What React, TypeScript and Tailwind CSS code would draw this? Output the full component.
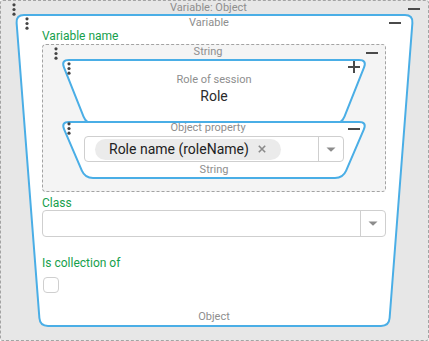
import React, { useLayoutEffect, useRef, useState } from "react";

const BLUE = "#4aaee6";

function roundedPolygon(pts: [number, number][], r: number) {
  let d = "";
  const n = pts.length;
  for (let i = 0; i < n; i++) {
    const v = pts[i];
    const p = pts[(i - 1 + n) % n];
    const q = pts[(i + 1) % n];
    const u1 = [p[0] - v[0], p[1] - v[1]];
    const l1 = Math.hypot(u1[0], u1[1]);
    const u2 = [q[0] - v[0], q[1] - v[1]];
    const l2 = Math.hypot(u2[0], u2[1]);
    const a = [v[0] + (u1[0] / l1) * r, v[1] + (u1[1] / l1) * r];
    const b = [v[0] + (u2[0] / l2) * r, v[1] + (u2[1] / l2) * r];
    d += `${i === 0 ? "M" : "L"}${a[0]},${a[1]} Q${v[0]},${v[1]} ${b[0]},${b[1]} `;
  }
  return d + "Z";
}

function Trap({
  inset = 24,
  radius = 8,
  className = "",
  children,
}: {
  inset?: number;
  radius?: number;
  className?: string;
  children?: React.ReactNode;
}) {
  const ref = useRef<HTMLDivElement>(null);
  const [size, setSize] = useState({ w: 0, h: 0 });
  useLayoutEffect(() => {
    const el = ref.current;
    if (!el) return;
    const update = () => setSize({ w: el.offsetWidth, h: el.offsetHeight });
    update();
    const ro = new ResizeObserver(update);
    ro.observe(el);
    return () => ro.disconnect();
  }, []);
  const { w, h } = size;
  const s = 1;
  const pts: [number, number][] = [
    [s, s],
    [w - s, s],
    [w - s - inset, h - s],
    [s + inset, h - s],
  ];
  return (
    <div ref={ref} className={className}>
      {w > 0 && (
        <svg className="absolute left-0 top-0 pointer-events-none" width={w} height={h}>
          <path d={roundedPolygon(pts, radius)} fill="#ffffff" stroke={BLUE} strokeWidth={2} />
        </svg>
      )}
      {children}
    </div>
  );
}

function Dots({ className }: { className: string }) {
  return (
    <svg className={className} width="4" height="13" viewBox="0 0 4 13">
      <circle cx="2" cy="1.8" r="1.6" fill="#444" />
      <circle cx="2" cy="6.5" r="1.6" fill="#444" />
      <circle cx="2" cy="11.2" r="1.6" fill="#444" />
    </svg>
  );
}

function Minus({ className }: { className: string }) {
  return (
    <svg className={className} width="12" height="2" viewBox="0 0 12 2">
      <rect x="0" y="0" width="12" height="2" fill="#4a4a4a" />
    </svg>
  );
}

function Plus({ className }: { className: string }) {
  return (
    <svg className={className} width="12" height="12" viewBox="0 0 12 12">
      <rect x="0" y="5" width="12" height="2" fill="#4a4a4a" />
      <rect x="5" y="0" width="2" height="12" fill="#4a4a4a" />
    </svg>
  );
}

function Caret() {
  return (
    <svg width="10" height="5" viewBox="0 0 10 5">
      <path d="M0.5 0.5 L9.5 0.5 L5 4.8 Z" fill="#8c8c8c" />
    </svg>
  );
}

export default function App() {
  return (
    <div className="font-['Roboto',sans-serif]">
      <div className="relative w-[429px] h-[341px] border border-dashed border-[#a3a3a3] rounded-[3px] bg-[#e7e7e7]">
        <Dots className="absolute left-[11px] top-[2px]" />
        <Minus className="absolute right-[8px] top-[7px]" />
        <div className="h-[13px] pr-[12px] flex items-center justify-center text-[11px] leading-[13px] text-[#8e8e8e]">
          Variable: Object
        </div>

        <Trap className="relative ml-[14px] w-[399px] pt-[2px]">
          <Dots className="absolute left-[10px] top-[3px]" />
          <Minus className="absolute right-[13px] top-[8px]" />
          <div className="relative">
            <div className="h-[14px] pr-[11px] text-center text-[11px] leading-[14px] text-[#8e8e8e]">
              Variable
            </div>
            <div className="pl-[27px] pr-[28px] flex flex-col">
              <div className="h-[13px] text-[12px] leading-[13px] text-[#16a04c]">Variable name</div>

              <div className="relative mt-[1px] border border-dashed border-[#a3a3a3] rounded-[4px] bg-[#f4f4f4] pl-[17px] pr-[17px] pb-[12px]">
                <Dots className="absolute left-[11px] top-[2px]" />
                <Minus className="absolute right-[7px] top-[7px]" />
                <div className="h-[14px] -mx-[17px] pr-[12px] text-center text-[11px] leading-[14px] text-[#8e8e8e]">
                  String
                </div>

                <Trap inset={25.5} className="relative h-[66px]">
                  <Dots className="absolute left-[7px] top-[3px]" />
                  <Plus className="absolute right-[8px] top-[2px]" />
                  <div className="relative pt-[14px] flex flex-col items-center">
                    <div className="text-[11px] leading-[14px] text-[#8e8e8e]">Role of session</div>
                    <div className="text-[14px] leading-[18px] text-[#2b2b2b]">Role</div>
                  </div>
                </Trap>

                <Trap className="relative z-[1] -mt-[4px] h-[58px]">
                  <Dots className="absolute left-[7px] top-[1px]" />
                  <Minus className="absolute right-[8px] top-[7px]" />
                  <div className="relative flex flex-col">
                    <div className="h-[14px] pr-[12px] text-center text-[11px] leading-[14px] text-[#8e8e8e]">
                      Object property
                    </div>
                    <div className="mt-[1px] mx-[24px] h-[26px] border border-[#cfcfcf] rounded-[4px] flex bg-white">
                      <div className="flex-1 flex items-center pl-[10px]">
                        <div className="h-[21px] flex items-center gap-[9px] rounded-full bg-[#ebebeb] pl-[14px] pr-[15px]">
                          <span className="text-[14px] leading-[21px] text-[#222]">Role name (roleName)</span>
                          <svg width="8" height="8" viewBox="0 0 8 8">
                            <path d="M0.8 0.8 L7.2 7.2 M7.2 0.8 L0.8 7.2" stroke="#8a8a8a" strokeWidth="1.6" />
                          </svg>
                        </div>
                      </div>
                      <div className="w-[25px] border-l border-[#cfcfcf] flex items-center justify-center">
                        <Caret />
                      </div>
                    </div>
                    <div className="mt-[1px] h-[14px] text-center text-[11px] leading-[14px] text-[#8e8e8e]">
                      String
                    </div>
                  </div>
                </Trap>
              </div>

              <div className="mt-[5px] h-[13px] text-[12px] leading-[13px] text-[#16a04c]">Class</div>
              <div className="h-[27px] border border-[#cfcfcf] rounded-[4px] flex bg-white">
                <div className="flex-1" />
                <div className="w-[25px] border-l border-[#cfcfcf] flex items-center justify-center">
                  <Caret />
                </div>
              </div>

              <div className="mt-[19px] h-[14px] text-[12px] leading-[14px] text-[#16a04c]">Is collection of</div>
              <div className="mt-[7px] ml-[1px] w-[16px] h-[16px] border border-[#cfcfcf] rounded-[4px] bg-white" />

              <div className="mt-[17px] h-[14px] text-center text-[11px] leading-[14px] text-[#8e8e8e]">Object</div>
              <div className="h-[3px]" />
            </div>
          </div>
        </Trap>
      </div>
    </div>
  );
}
